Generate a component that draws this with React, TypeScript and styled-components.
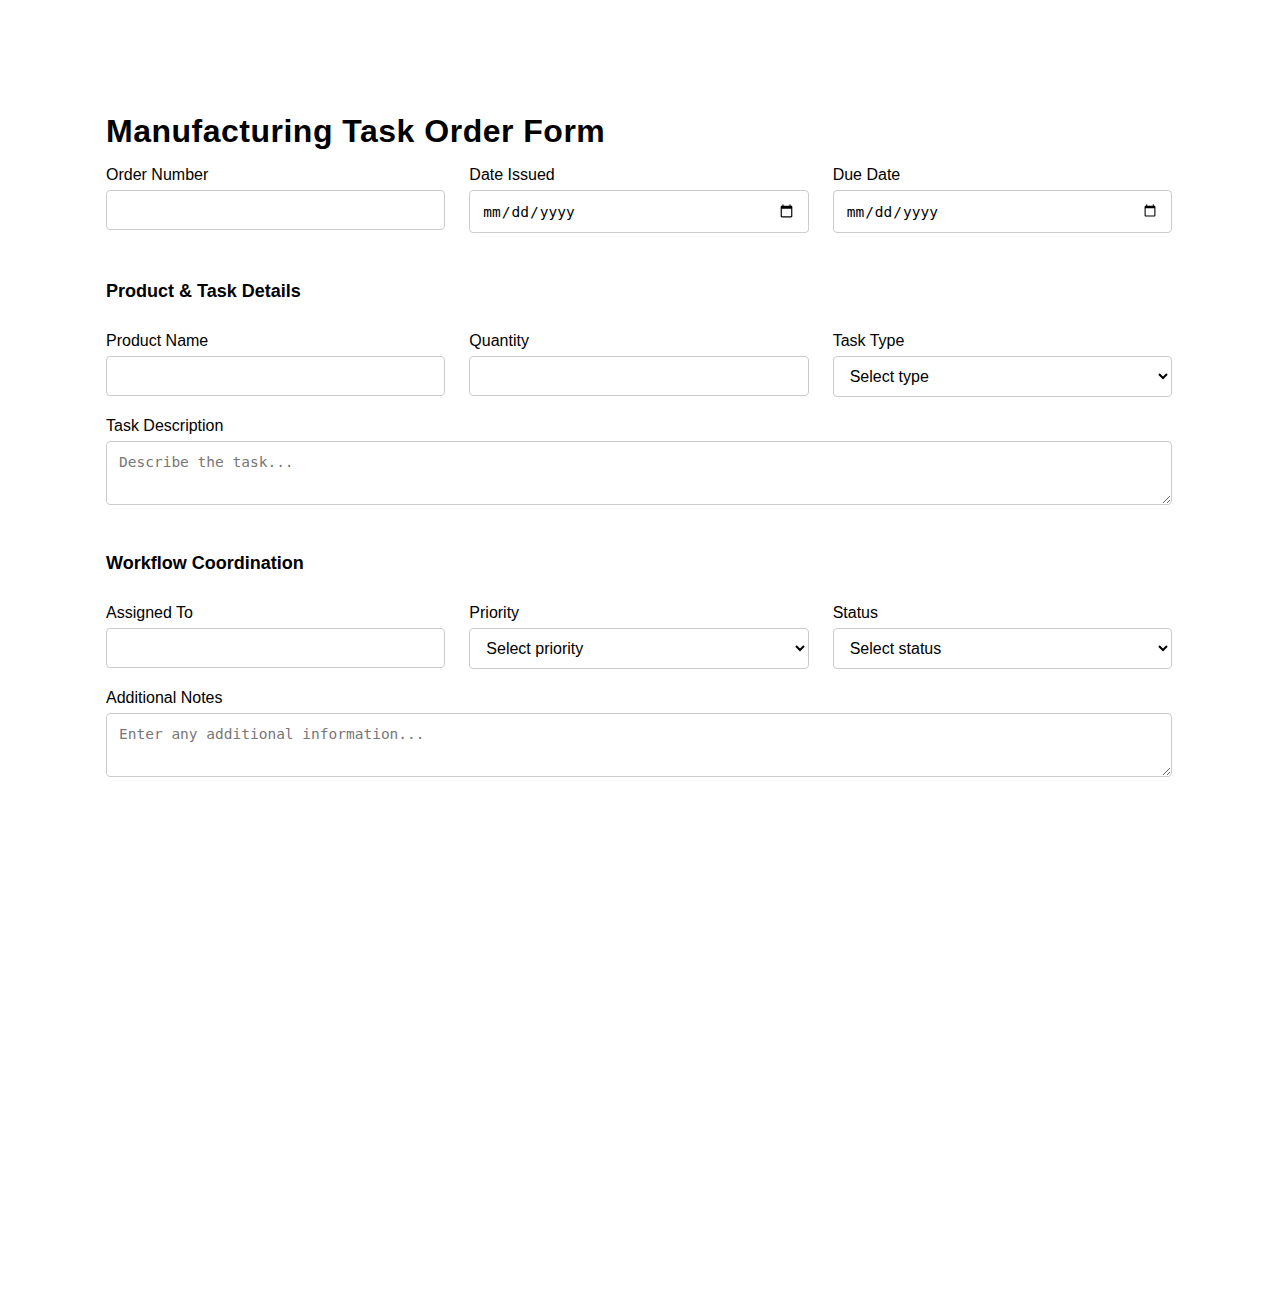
import React from "react";
import styled, { createGlobalStyle } from "styled-components";

const GlobalStyle = createGlobalStyle`
  body {
    margin: 0;
    background: #fff;
    font-family: "Liberation Sans", Arial, sans-serif;
    color: #000;
  }
`;

const Page = styled.div`
  max-width: 1066px;
  margin: 0 auto;
  padding: 113px 0 40px;
`;

const Title = styled.h1`
  font-size: 32px;
  font-weight: bold;
  letter-spacing: 0.5px;
  margin: 0 0 16px;
  line-height: 37px;
`;

const SectionTitle = styled.h2`
  font-size: 18px;
  font-weight: bold;
  margin: 48px 0 30px;
  line-height: 21px;
`;

const Row = styled.div`
  display: grid;
  grid-template-columns: repeat(3, 1fr);
  column-gap: 24px;
`;

const Field = styled.div<{ $full?: boolean }>`
  display: flex;
  flex-direction: column;
  margin-top: ${(p) => (p.$full ? "20px" : "0")};
`;

const Label = styled.label`
  font-size: 16px;
  line-height: 18px;
  margin-bottom: 6px;
`;

const Input = styled.input`
  padding: 10px 12px;
  border: 1px solid #ccc;
  border-radius: 4px;
  box-sizing: border-box;
  width: 100%;
  height: ${(p) => (p.type === "date" ? "43px" : "40px")};
  font-family: "DejaVu Sans Mono", monospace;
  font-size: 14.5px;
  background: #fff;
  color: #000;
`;

const Select = styled.select`
  padding: 10px 12px;
  border: 1px solid #ccc;
  border-radius: 4px;
  box-sizing: border-box;
  width: 100%;
  height: 41px;
  font-family: "Liberation Sans", Arial, sans-serif;
  font-size: 16px;
  background: #fff;
  color: #000;
`;

const TextArea = styled.textarea`
  padding: 11px 12px;
  border: 1px solid #ccc;
  border-radius: 4px;
  box-sizing: border-box;
  width: 100%;
  height: 64px;
  font-family: "DejaVu Sans Mono", monospace;
  font-size: 14.5px;
  line-height: 18px;

  &::placeholder {
    color: #777;
  }
`;

const App: React.FC = () => {
  return (
    <>
      <GlobalStyle />
      <Page>
        <Title>Manufacturing Task Order Form</Title>
        <Row>
          <Field>
            <Label>Order Number</Label>
            <Input type="text" />
          </Field>
          <Field>
            <Label>Date Issued</Label>
            <Input type="date" />
          </Field>
          <Field>
            <Label>Due Date</Label>
            <Input type="date" />
          </Field>
        </Row>

        <SectionTitle>Product &amp; Task Details</SectionTitle>
        <Row>
          <Field>
            <Label>Product Name</Label>
            <Input type="text" />
          </Field>
          <Field>
            <Label>Quantity</Label>
            <Input type="number" />
          </Field>
          <Field>
            <Label>Task Type</Label>
            <Select defaultValue="">
              <option value="">Select type</option>
              <option>Assembly</option>
              <option>Machining</option>
              <option>Inspection</option>
            </Select>
          </Field>
        </Row>
        <Field $full>
          <Label>Task Description</Label>
          <TextArea placeholder="Describe the task..." />
        </Field>

        <SectionTitle>Workflow Coordination</SectionTitle>
        <Row>
          <Field>
            <Label>Assigned To</Label>
            <Input type="text" />
          </Field>
          <Field>
            <Label>Priority</Label>
            <Select defaultValue="">
              <option value="">Select priority</option>
              <option>Low</option>
              <option>Medium</option>
              <option>High</option>
            </Select>
          </Field>
          <Field>
            <Label>Status</Label>
            <Select defaultValue="">
              <option value="">Select status</option>
              <option>Pending</option>
              <option>In Progress</option>
              <option>Completed</option>
            </Select>
          </Field>
        </Row>
        <Field $full>
          <Label>Additional Notes</Label>
          <TextArea placeholder="Enter any additional information..." />
        </Field>
      </Page>
    </>
  );
};

export default App;
